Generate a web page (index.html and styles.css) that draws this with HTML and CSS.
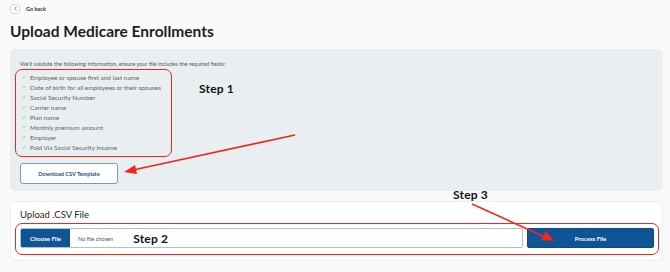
FILE: index.html
```html
<!DOCTYPE html>
<html lang="en">
<head>
    <meta charset="UTF-8">
    <meta name="viewport" content="width=device-width, initial-scale=1.0">
    <title>Upload Medicare Enrollments</title>
    <link rel="stylesheet" href="styles.css">
</head>
<body>
    <div class="page">
        <!-- Back link -->
        <a class="back-link" href="#">
            <span class="back-icon">
                <svg width="5" height="5" viewBox="0 0 10 10"><path d="M6.5 2 L3.5 5 L6.5 8" fill="none" stroke="#444" stroke-width="1.4" stroke-linecap="round" stroke-linejoin="round"/></svg>
            </span>
            Go back
        </a>

        <h1 class="title">Upload Medicare Enrollments</h1>

        <!-- Requirements panel -->
        <div class="panel info">
            <p class="intro">We'll validate the following information, ensure your file includes the required fields:</p>
            <div class="req-row">
                <ul class="req-list highlight">
                    <li>Employee or spouse first and last name</li>
                    <li>Date of birth for all employees or their spouses</li>
                    <li>Social Security Number</li>
                    <li>Carrier name</li>
                    <li>Plan name</li>
                    <li>Monthly premium amount</li>
                    <li>Employer</li>
                    <li>Paid Via Social Security Income</li>
                </ul>
                <div class="step step-1">Step 1</div>
            </div>
            <button class="btn-outline">Download CSV Template</button>
        </div>

        <!-- Upload panel -->
        <div class="panel upload">
            <div class="upload-title">Upload .CSV File</div>
            <div class="upload-row highlight">
                <div class="file-input">
                    <span class="choose-btn">Choose File</span>
                    <span class="file-name">No file chosen</span>
                    <span class="step step-2">Step 2</span>
                </div>
                <button class="btn-primary">Process File</button>
            </div>
        </div>
    </div>

    <!-- Annotations -->
    <div class="step step-3">Step 3</div>
    <svg class="arrows" width="670" height="272" viewBox="0 0 670 272">
        <line x1="295" y1="135" x2="133" y2="170" stroke="#f2261a" stroke-width="1.6"/>
        <polygon points="124,172 135,165 137,174" fill="#f2261a"/>
        <line x1="472" y1="204" x2="545" y2="237" stroke="#f2261a" stroke-width="1.6"/>
        <polygon points="554,241 541,240 546,231" fill="#f2261a"/>
    </svg>
</body>
</html>
```

FILE: styles.css
```css
body {
    margin: 0;
    padding: 0;
    background-color: #fafafa;
    font-family: Lato, "Open Sans", Arial, sans-serif;
    color: #1f2226;
    position: relative;
    width: 670px;
    height: 272px;
    overflow: hidden;
}

.page {
    padding: 4px 7px 0 10px;
}

/* Back link */
.back-link {
    display: flex;
    align-items: center;
    gap: 6px;
    font-size: 5.5px;
    font-weight: bold;
    color: #333;
    text-decoration: none;
    height: 9px;
}

.back-icon {
    width: 8px;
    height: 8px;
    border: 1px solid #d5d9dd;
    border-radius: 3px;
    background: #fff;
    display: flex;
    align-items: center;
    justify-content: center;
}

.title {
    font-size: 15.5px;
    font-weight: bold;
    margin: 9px 0 0 0;
    line-height: 18px;
    color: #1d1f22;
}

/* Panels */
.panel {
    border-radius: 5px;
    padding: 0 10px;
}

.info {
    background-color: #e9eef1;
    margin-top: 9px;
    height: 142px;
    box-sizing: border-box;
    padding-top: 11px;
}

.intro {
    margin: 0;
    font-size: 5.6px;
    color: #555a5f;
    line-height: 7px;
}

.highlight {
    border: 1.5px solid #f2261a;
    border-radius: 7px;
}

.req-row {
    display: flex;
    align-items: flex-start;
    margin-top: 2px;
    margin-left: -5px;
}

.req-list {
    list-style: none;
    margin: 0;
    padding: 3px 8px 4px 6px;
    width: 141px;
}

.req-list li {
    display: flex;
    align-items: center;
    height: 9.9px;
    font-size: 6.4px;
    color: #5f666c;
    white-space: nowrap;
}

.req-list li::before {
    content: "\2713";
    color: #6cc08a;
    font-size: 5px;
    line-height: 5px;
    margin-right: 4px;
}

.step {
    font-size: 12px;
    font-weight: bold;
    color: #111;
    letter-spacing: 0.2px;
}

.step-1 {
    margin: 12px 0 0 27px;
}

.btn-outline {
    display: block;
    margin-top: 6px;
    width: 98px;
    height: 21px;
    padding: 0;
    background: #fff;
    border: 1px solid #7b9bbd;
    border-radius: 3px;
    color: #1e4f84;
    font-family: inherit;
    font-size: 5.6px;
    font-weight: bold;
}

.upload {
    background: #fff;
    border: 1px solid #eceef0;
    margin-top: 10px;
    height: 60px;
    box-sizing: border-box;
    padding: 7px 3px 0 4px;
}

.upload-title {
    font-size: 9.5px;
    color: #1d1f22;
    margin-left: 5px;
    line-height: 12px;
}

.upload-row {
    display: flex;
    gap: 4px;
    margin-top: 2px;
    padding: 4px 4px 6px 4px;
}

.file-input {
    flex: 1;
    display: flex;
    align-items: center;
    height: 20px;
    border: 1px solid #a9c1da;
    border-radius: 2px;
    box-sizing: border-box;
    overflow: hidden;
}

.choose-btn {
    background: #0f5595;
    color: #fff;
    font-size: 6px;
    font-weight: bold;
    height: 100%;
    width: 49px;
    display: flex;
    align-items: center;
    justify-content: center;
}

.file-name {
    font-size: 5.6px;
    color: #555;
    margin-left: 8px;
}

.step-2 {
    margin-left: 20px;
}

.btn-primary {
    width: 127px;
    height: 20px;
    padding: 0;
    background: #0f5595;
    border: 1px solid #0b4b86;
    border-radius: 2px;
    color: #fff;
    font-family: inherit;
    font-size: 6px;
    font-weight: bold;
}

/* Annotation overlay */
.step-3 {
    position: absolute;
    left: 453px;
    top: 187px;
}

.arrows {
    position: absolute;
    left: 0;
    top: 0;
    pointer-events: none;
}
```
